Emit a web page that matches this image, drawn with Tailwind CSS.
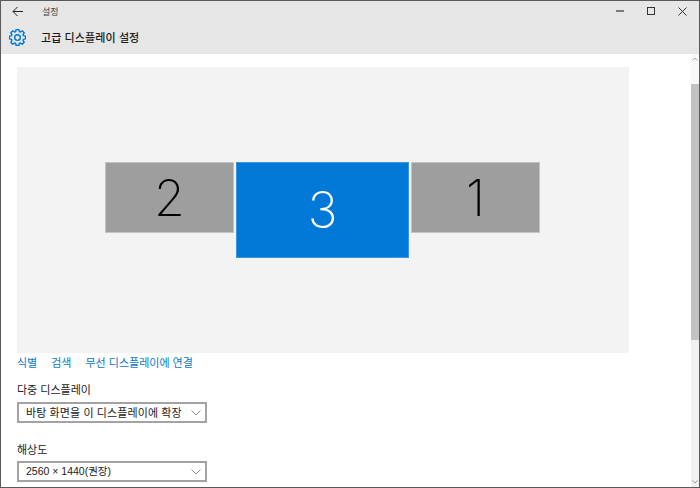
<!DOCTYPE html>
<html lang="ko">
<head>
<meta charset="UTF-8">
<title>설정</title>
<script src="https://cdn.jsdelivr.net/npm/@tailwindcss/browser@4"></script>
</head>
<body class="bg-white font-['Noto_Sans_CJK_KR','Noto_Sans',sans-serif]">
<div class="w-[700px] h-[488px] overflow-hidden border border-[#5a5a5a] flex flex-col">
  <!-- title bar -->
  <header class="h-[53px] shrink-0 bg-[#e6e6e6]">
    <div class="h-[20px] flex items-center text-[#333]">
      <svg class="ml-[11px] w-[11px] h-[11px]" viewBox="0 0 11 11" fill="none" stroke="#222" stroke-width="1"><path d="M5.5 1 1 5.5 5.5 10M1 5.5h10"/></svg>
      <span class="ml-[19px] text-[9px] leading-none text-[#444]">설정</span>
      <div class="ml-auto flex items-center">
        <svg class="w-[8px] h-[8px] mr-[23px]" viewBox="0 0 8 8"><path d="M0 4h8" stroke="#333" stroke-width="1.2"/></svg>
        <svg class="w-[8px] h-[8px] mr-[23px]" viewBox="0 0 8 8" fill="none"><rect x=".5" y=".5" width="7" height="7" stroke="#333"/></svg>
        <svg class="w-[9px] h-[9px] mr-[12px]" viewBox="0 0 9 9"><path d="M.5.5l8 8M8.5.5l-8 8" stroke="#333"/></svg>
      </div>
    </div>
    <div class="h-[32px] flex items-center">
      <svg class="ml-[8px] w-[17px] h-[17px]" viewBox="0 0 24 24" fill="none" stroke="#0078d7" stroke-width="2" stroke-linejoin="round"><path d="M9.43 3.59 10 .67h4l.57 2.92 1.56.64 2.47-1.65 2.82 2.82-1.65 2.47.64 1.56 2.92.57v4l-2.92.57-.64 1.56 1.65 2.47-2.82 2.82-2.47-1.65-1.56.64-.57 2.92h-4l-.57-2.92-1.56-.64-2.47 1.65-2.82-2.82 1.65-2.47-.64-1.56-2.92-.57v-4l2.92-.57.64-1.56-1.65-2.47 2.82-2.82 2.47 1.65z"/><circle cx="12" cy="12" r="4"/></svg>
      <h1 class="ml-[15px] text-[11px] font-medium leading-none text-[#1a1a1a] tracking-[0.1px]">고급 디스플레이 설정</h1>
    </div>
  </header>

  <div class="flex-1 flex min-h-0">
    <main class="flex-1 pl-[16px] pt-[13px]">
      <!-- display canvas -->
      <div class="w-[612px] h-[286px] bg-[#f3f3f3] flex justify-center items-start gap-[2px] pt-[95px] pr-[1px]">
        <div class="w-[129px] h-[71px] bg-[#9e9e9e] border border-[#c4c4c4] flex items-center justify-center text-[50px] font-extralight leading-none text-black font-['Inter',sans-serif]">2</div>
        <div class="w-[173px] h-[96px] bg-[#0078d7] border border-[#3a96e0] flex items-center justify-center text-[50px] font-extralight leading-none text-white font-['Inter',sans-serif]">3</div>
        <div class="w-[129px] h-[71px] bg-[#9e9e9e] border border-[#c4c4c4] flex items-center justify-center text-[50px] font-extralight leading-none text-black font-['Inter',sans-serif]">1</div>
      </div>

      <nav class="h-[18px] flex items-center gap-[14px] text-[11px] text-[#0a78c8]">
        <span>식별</span><span>검색</span><span>무선 디스플레이에 연결</span>
      </nav>

      <p class="mt-[10px] h-[16px] flex items-center text-[11px] text-[#222]">다중 디스플레이</p>
      <div class="mt-[5px] w-[190px] h-[21px] border-2 border-[#a3a3a3] flex items-center pl-[7px] text-[11px] text-[#222]">
        <span class="tracking-[0.1px]">바탕 화면을 이 디스플레이에 확장</span>
        <svg class="ml-auto mr-[4px] w-[10px] h-[6px]" viewBox="0 0 10 6" fill="none"><path d="M.5.5 5 5 9.5.5" stroke="#888"/></svg>
      </div>

      <p class="mt-[18px] h-[16px] flex items-center text-[11px] text-[#222]">해상도</p>
      <div class="mt-[4px] w-[190px] h-[21px] border-2 border-[#a3a3a3] flex items-center pl-[7px] text-[10.5px] text-[#222] font-['Liberation_Sans','Noto_Sans_CJK_KR',sans-serif]">
        <span>2560 × 1440(권장)</span>
        <svg class="ml-auto mr-[4px] w-[10px] h-[6px]" viewBox="0 0 10 6" fill="none"><path d="M.5.5 5 5 9.5.5" stroke="#888"/></svg>
      </div>
    </main>

    <!-- scrollbar -->
    <aside class="w-[8px] shrink-0 bg-[#f0f0f0] flex flex-col">
      <div class="h-[30px] flex items-start justify-center pt-[3px] bg-[#f8f8f8]">
        <svg class="w-[6px] h-[4px]" viewBox="0 0 6 4" fill="none"><path d="M.5 3.5 3 1l2.5 2.5" stroke="#aaa"/></svg>
      </div>
      <div class="h-[256px] bg-[#c2c2c2]"></div>
      <div class="mt-auto h-[10px] flex justify-center items-center">
        <svg class="w-[6px] h-[4px]" viewBox="0 0 6 4" fill="none"><path d="M.5.5 3 3l2.5-2.5" stroke="#999"/></svg>
      </div>
    </aside>
  </div>
</div>
</body>
</html>
